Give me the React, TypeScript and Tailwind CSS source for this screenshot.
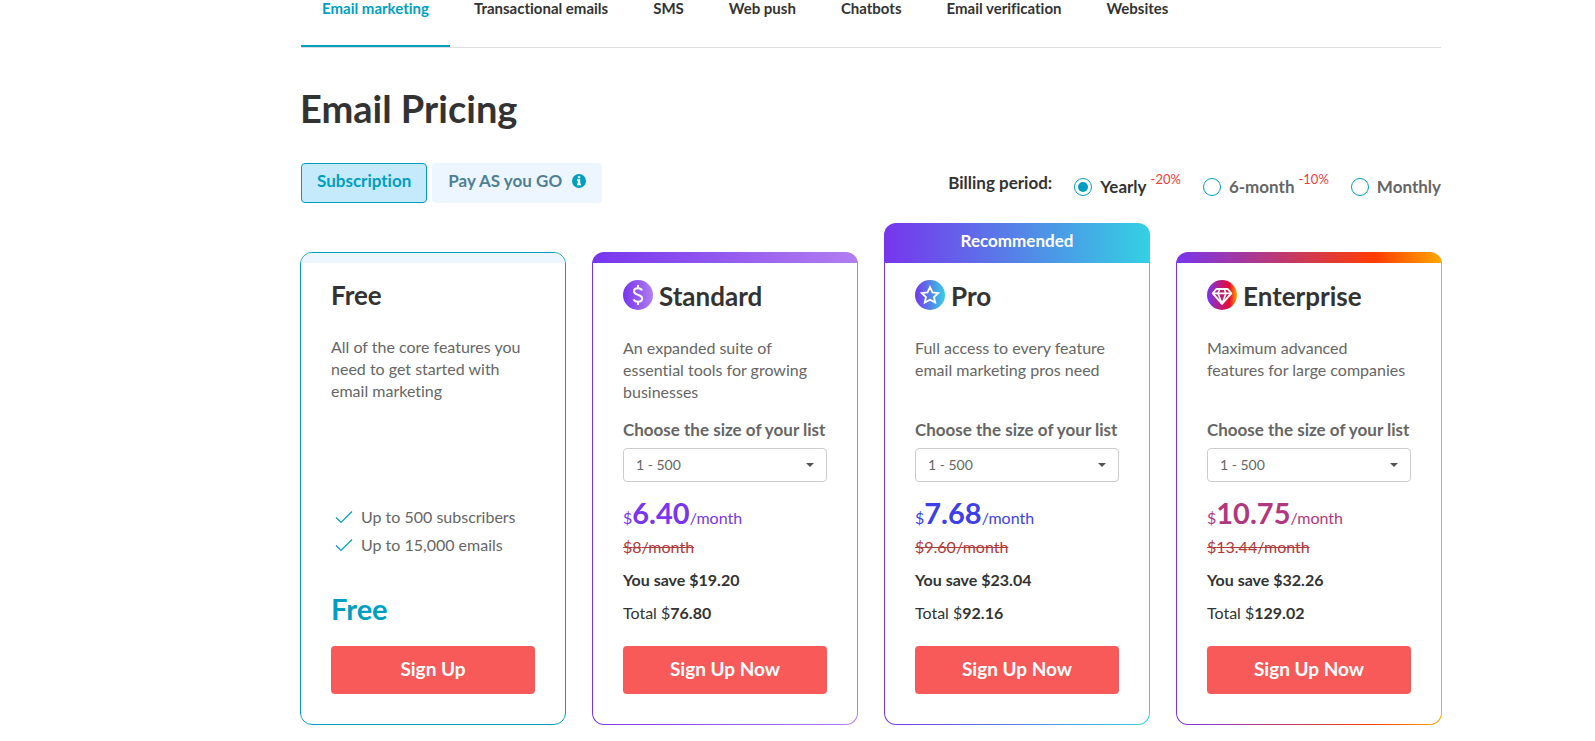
import { useState } from "react";
import type { ReactNode } from "react";

const tabs = [
  "Email marketing",
  "Transactional emails",
  "SMS",
  "Web push",
  "Chatbots",
  "Email verification",
  "Websites",
];

const periods = [
  { name: "Yearly", discount: "-20%" },
  { name: "6-month", discount: "-10%" },
  { name: "Monthly", discount: "" },
];

const sizes = ["1 - 500", "501 - 1 000", "1 001 - 2 000", "2 001 - 3 000"];

const plans = [
  {
    name: "Standard",
    description: "An expanded suite of essential tools for growing businesses",
    price: "6.40",
    oldPrice: "8",
    save: "19.20",
    total: "76.80",
    recommended: false,
    frame: "bg-linear-to-r/srgb from-[#7735ed] to-[#b27ef1]",
    priceColor: "text-[#7936ed]",
    stops: [
      ["0", "#7735ed"],
      ["1", "#b27ef1"],
    ],
    glyph: (
      <g fill="none" stroke="#fff" strokeWidth="2">
        <path d="M19 10.300C18.300 8.800 17 8.200 15 8.200c-2.500 0-4 1.200-4 3.100 0 4.700 8.200 2.500 8.200 7.200 0 2-1.700 3.200-4.200 3.200-2.200 0-3.700-.8-4.400-2.300" />
        <path d="M15 5v3.500M15 21.500V25" />
      </g>
    ),
  },
  {
    name: "Pro",
    description: "Full access to every feature email marketing pros need",
    price: "7.68",
    oldPrice: "9.60",
    save: "23.04",
    total: "92.16",
    recommended: true,
    frame: "bg-linear-to-r/srgb from-[#7735ed] to-[#33d1e3]",
    priceColor: "text-[#3f3fe6]",
    stops: [
      ["0", "#7735ed"],
      ["1", "#33d1e3"],
    ],
    glyph: (
      <path
        d="M15 7.200l2.500 5.200 5.700.7-4.200 3.900 1.200 5.600-5.200-2.900-5.200 2.900 1.200-5.600-4.200-3.900 5.700-.7z"
        fill="none"
        stroke="#fff"
        strokeWidth="1.800"
      />
    ),
  },
  {
    name: "Enterprise",
    description: "Maximum advanced\nfeatures for large companies",
    price: "10.75",
    oldPrice: "13.44",
    save: "32.26",
    total: "129.02",
    recommended: false,
    frame: "bg-linear-to-r/srgb from-[#7735ed] via-[#ff3c00] via-75% to-[#ffa800]",
    priceColor: "text-[#b1387f]",
    stops: [
      ["0", "#7735ed"],
      ["0.75", "#ea0a30"],
      ["1", "#ffa800"],
    ],
    glyph: (
      <g fill="none" stroke="#fff" strokeWidth="2" strokeLinejoin="round">
        <path d="M9.300 9h11.400l3.500 4.400L15 23.800 5.800 13.400z" />
        <path d="M5.800 13.400h18.400M15 23.800l-4-10.400L12.800 9M15 23.800l4-10.400L17.200 9" strokeWidth="1.600" />
      </g>
    ),
  },
];

function PlanIcon({ id, stops, children }: { id: string; stops: string[][]; children: ReactNode }) {
  return (
    <svg width="30" height="30" viewBox="0 0 30 30" aria-hidden="true">
      <defs>
        <linearGradient id={id}>
          {stops.map(([offset, color]) => (
            <stop key={offset} offset={offset} stopColor={color} />
          ))}
        </linearGradient>
      </defs>
      <circle cx="15" cy="15" r="15" fill={`url(#${id})`} />
      {children}
    </svg>
  );
}

function Check() {
  return (
    <svg width="18" height="14" viewBox="0 0 18 14" fill="none" stroke="#009fc1" aria-hidden="true">
      <path d="M1 7.500l5 5L17 1.500" strokeWidth="1.200" />
    </svg>
  );
}

function SignUp({ children }: { children: ReactNode }) {
  return (
    <button
      type="button"
      className="h-12 w-full rounded bg-[#f85959] pb-0.5 text-[19px] font-bold text-white hover:bg-[#ea4747]"
    >
      {children}
    </button>
  );
}

function Tabs() {
  return (
    <nav className="mx-px flex h-12 gap-[3px] border-b border-[#dcdcdc]">
      {tabs.map((tab, i) => (
        <a
          key={tab}
          href="#"
          className={`border-b-2 px-[21px] text-[15px] leading-4 font-bold ${
            i === 0 ? "border-[#009fc1] text-[#009fc1]" : "border-transparent text-[#333]"
          }`}
        >
          {tab}
        </a>
      ))}
    </nav>
  );
}

function BillingPeriod() {
  const [period, setPeriod] = useState("Yearly");

  return (
    <fieldset className="flex items-center text-[17px] leading-6 font-bold text-[#333]">
      <span className="mr-[22px]">Billing period:</span>
      <div className="flex gap-[22px] pt-2">
        {periods.map(({ name, discount }) => (
          <label key={name} className={`flex items-center ${period === name ? "" : "text-[#666]"}`}>
            <input
              type="radio"
              name="period"
              checked={period === name}
              onChange={() => setPeriod(name)}
              className="mr-2 size-[18px] appearance-none rounded-full border border-[#009fc1] bg-clip-content p-[3px] checked:bg-[#009fc1]"
            />
            {name}
            {discount && (
              <span className="ml-1 pb-4 text-[13px] leading-4 font-normal text-[#f33b3b]">{discount}</span>
            )}
          </label>
        ))}
      </div>
    </fieldset>
  );
}

function FreeCard() {
  return (
    <article className="mt-[29px] flex flex-col overflow-hidden rounded-xl border border-[#009fc1]">
      <div className="h-2.5 bg-[#edf6ff]" />
      <div className="flex grow flex-col px-[30px] pt-[17px] pb-[30px]">
        <h2 className="text-[26px] leading-[30px] font-bold text-[#333]">Free</h2>
        <p className="mt-[26px] text-base leading-[22px] text-[#666]">
          All of the core features you need to get started with email marketing
        </p>
        <ul className="mt-auto space-y-1 text-base text-[#666]">
          {["Up to 500 subscribers", "Up to 15,000 emails"].map((item) => (
            <li key={item} className="flex items-center gap-2 pl-1">
              <Check />
              {item}
            </li>
          ))}
        </ul>
        <p className="mt-[34px] mb-[19px] text-[29px] leading-9 font-bold text-[#009fc1]">Free</p>
        <SignUp>Sign Up</SignUp>
      </div>
    </article>
  );
}

function PlanCard({ plan }: { plan: (typeof plans)[number] }) {
  const id = plan.name.toLowerCase();

  return (
    <article
      className={`flex flex-col overflow-hidden rounded-xl px-px pb-px ${plan.frame} ${
        plan.recommended ? "" : "mt-[29px]"
      }`}
    >
      {plan.recommended ? (
        <p className="h-10 text-center text-[17px] leading-9 font-bold text-white">Recommended</p>
      ) : (
        <div className="h-[11px]" />
      )}
      <div className="flex grow flex-col rounded-b-[11px] bg-white px-[30px] pt-[17px] pb-[30px]">
        <h2 className="flex items-start gap-1.5 text-[26px] leading-8 font-bold text-[#333]">
          <PlanIcon id={`${id}-gradient`} stops={plan.stops}>
            {plan.glyph}
          </PlanIcon>
          {plan.name}
        </h2>
        <p className="mt-[25px] min-h-[66px] text-base leading-[22px] whitespace-pre-line text-[#666]">
          {plan.description}
        </p>
        <label htmlFor={`${id}-size`} className="mt-[15px] text-[17px] leading-6 font-bold text-[#666]">
          Choose the size of your list
        </label>
        <div className="relative mt-1.5">
          <select
            id={`${id}-size`}
            className="h-[34px] w-full appearance-none rounded border border-[#ccc] bg-white px-3 text-sm text-[#666]"
          >
            {sizes.map((size) => (
              <option key={size}>{size}</option>
            ))}
          </select>
          <span className="pointer-events-none absolute top-[15px] right-[13px] border-x-4 border-t-4 border-x-transparent border-t-[#555]" />
        </div>
        <p className={`mt-3.5 text-base leading-[34px] ${plan.priceColor}`}>
          $<strong className="text-[29px]">{plan.price}</strong>/month
        </p>
        <p className="text-base text-[#b03a3a] line-through">${plan.oldPrice}/month</p>
        <p className="mt-[9px] text-base font-bold text-[#333]">You save ${plan.save}</p>
        <p className="mt-[9px] mb-[21px] text-base text-[#333]">
          Total $<strong>{plan.total}</strong>
        </p>
        <SignUp>Sign Up Now</SignUp>
      </div>
    </article>
  );
}

export default function App() {
  return (
    <div className="bg-white pb-4 pl-[147px] font-['Lato','Open_Sans',sans-serif] [font-variant-ligatures:none]">
      <main className="mx-auto max-w-[1142px]">
        <Tabs />
        <h1 className="mt-9 text-[38px] leading-[48px] font-bold text-[#333]">Email Pricing</h1>
        <div className="mx-px mt-[31px] flex h-10 items-center justify-between">
          <div className="flex gap-[5px]">
            <button
              type="button"
              className="h-10 rounded border border-[#009fc1] bg-[#c4eafc] px-[15px] pb-1 text-[17px] leading-6 font-bold text-[#009fc1]"
            >
              Subscription
            </button>
            <button
              type="button"
              className="flex h-10 items-center gap-2.5 rounded bg-[#edf6ff] px-4 pb-1 text-[17px] leading-6 font-bold text-[#4f7f93]"
            >
              Pay AS you GO
              <svg width="14" height="14" viewBox="0 0 14 14" aria-hidden="true">
                <circle cx="7" cy="7" r="7" fill="#009fc1" />
                <path d="M5.800 2.300h2.400v2H5.800zM5 5.300h3.200v4.200H9v1.700H5V9.500h.9V7H5z" fill="#fff" />
              </svg>
            </button>
          </div>
          <BillingPeriod />
        </div>
        <div className="mt-5 grid grid-cols-4 gap-[26px]">
          <FreeCard />
          {plans.map((plan) => (
            <PlanCard key={plan.name} plan={plan} />
          ))}
        </div>
      </main>
    </div>
  );
}
